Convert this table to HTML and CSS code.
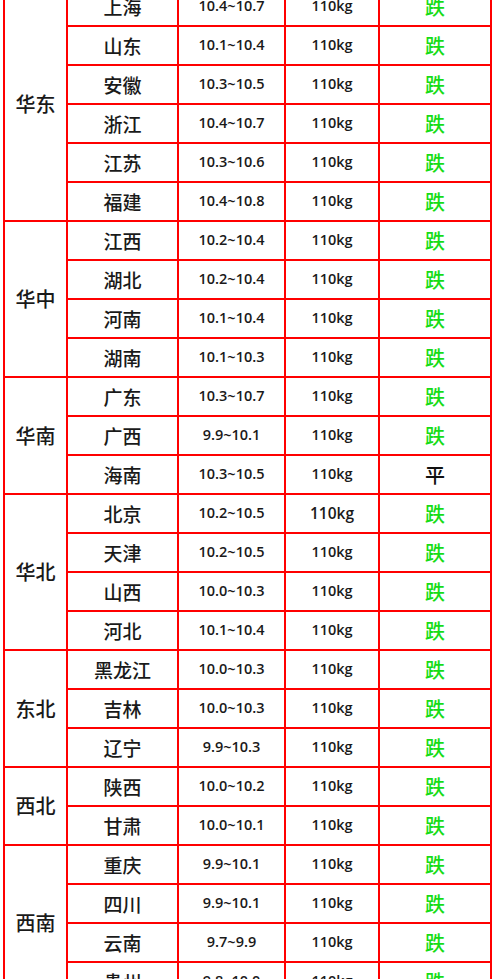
FILE: index.html
```html
<!DOCTYPE html>
<html lang="zh-CN">
<head>
<meta charset="utf-8">
<title>价格表</title>
<link rel="stylesheet" href="styles.css">
</head>
<body>
<table class="price">
  <colgroup>
    <col class="c-region">
    <col class="c-prov">
    <col class="c-price">
    <col class="c-weight">
    <col class="c-trend">
  </colgroup>
  <tbody>
    <tr><td class="region" rowspan="6">华东</td><td class="prov">上海</td><td class="num">10.4~10.7</td><td class="num">110kg</td><td class="down">跌</td></tr>
    <tr><td class="prov">山东</td><td class="num">10.1~10.4</td><td class="num">110kg</td><td class="down">跌</td></tr>
    <tr><td class="prov">安徽</td><td class="num">10.3~10.5</td><td class="num">110kg</td><td class="down">跌</td></tr>
    <tr><td class="prov">浙江</td><td class="num">10.4~10.7</td><td class="num">110kg</td><td class="down">跌</td></tr>
    <tr><td class="prov">江苏</td><td class="num">10.3~10.6</td><td class="num">110kg</td><td class="down">跌</td></tr>
    <tr><td class="prov">福建</td><td class="num">10.4~10.8</td><td class="num">110kg</td><td class="down">跌</td></tr>

    <tr><td class="region" rowspan="4">华中</td><td class="prov">江西</td><td class="num">10.2~10.4</td><td class="num">110kg</td><td class="down">跌</td></tr>
    <tr><td class="prov">湖北</td><td class="num">10.2~10.4</td><td class="num">110kg</td><td class="down">跌</td></tr>
    <tr><td class="prov">河南</td><td class="num">10.1~10.4</td><td class="num">110kg</td><td class="down">跌</td></tr>
    <tr><td class="prov">湖南</td><td class="num">10.1~10.3</td><td class="num">110kg</td><td class="down">跌</td></tr>

    <tr><td class="region" rowspan="3">华南</td><td class="prov">广东</td><td class="num">10.3~10.7</td><td class="num">110kg</td><td class="down">跌</td></tr>
    <tr><td class="prov">广西</td><td class="num">9.9~10.1</td><td class="num">110kg</td><td class="down">跌</td></tr>
    <tr><td class="prov">海南</td><td class="num">10.3~10.5</td><td class="num">110kg</td><td class="flat">平</td></tr>

    <tr><td class="region" rowspan="4">华北</td><td class="prov">北京</td><td class="num">10.2~10.5</td><td class="num big">110kg</td><td class="down">跌</td></tr>
    <tr><td class="prov">天津</td><td class="num">10.2~10.5</td><td class="num">110kg</td><td class="down">跌</td></tr>
    <tr><td class="prov">山西</td><td class="num">10.0~10.3</td><td class="num">110kg</td><td class="down">跌</td></tr>
    <tr><td class="prov">河北</td><td class="num">10.1~10.4</td><td class="num">110kg</td><td class="down">跌</td></tr>

    <tr><td class="region" rowspan="3">东北</td><td class="prov">黑龙江</td><td class="num">10.0~10.3</td><td class="num">110kg</td><td class="down">跌</td></tr>
    <tr><td class="prov">吉林</td><td class="num">10.0~10.3</td><td class="num">110kg</td><td class="down">跌</td></tr>
    <tr><td class="prov">辽宁</td><td class="num">9.9~10.3</td><td class="num">110kg</td><td class="down">跌</td></tr>

    <tr><td class="region" rowspan="2">西北</td><td class="prov">陕西</td><td class="num">10.0~10.2</td><td class="num">110kg</td><td class="down">跌</td></tr>
    <tr><td class="prov">甘肃</td><td class="num">10.0~10.1</td><td class="num">110kg</td><td class="down">跌</td></tr>

    <tr><td class="region" rowspan="4">西南</td><td class="prov">重庆</td><td class="num">9.9~10.1</td><td class="num">110kg</td><td class="down">跌</td></tr>
    <tr><td class="prov">四川</td><td class="num">9.9~10.1</td><td class="num">110kg</td><td class="down">跌</td></tr>
    <tr><td class="prov">云南</td><td class="num">9.7~9.9</td><td class="num">110kg</td><td class="down">跌</td></tr>
    <tr><td class="prov">贵州</td><td class="num">9.8~10.0</td><td class="num">110kg</td><td class="down">跌</td></tr>
  </tbody>
</table>
</body>
</html>
```

FILE: styles.css
```css
html, body {
  margin: 0;
  padding: 0;
  background: #ffffff;
}

body {
  height: 979px;
  overflow: hidden;
  font-family: "Noto Sans CJK SC", "Noto Sans", sans-serif;
  color: #1a1a1a;
}

.price {
  border-collapse: collapse;
  table-layout: fixed;
  width: 487px;
  margin: -14px 0 0 3px;
}

.c-region { width: 63px; }
.c-prov { width: 111px; }
.c-price { width: 107px; }
.c-weight { width: 94px; }
.c-trend { width: 112px; }

.price td {
  border: 2px solid #ff0000;
  height: 37px;
  padding: 0;
  text-align: center;
  vertical-align: middle;
  line-height: 1;
}

.region {
  font-size: 20px;
  font-weight: 500;
}

.prov {
  font-size: 19px;
  font-weight: 500;
}

.num {
  font-family: "Open Sans", "Noto Sans", sans-serif;
  font-size: 14.5px;
  font-weight: 600;
}

.num.big {
  font-size: 15.5px;
}

.down {
  color: #16dc16;
  font-size: 20px;
  font-weight: 500;
}

.flat {
  color: #111111;
  font-size: 20px;
  font-weight: 500;
}
```
